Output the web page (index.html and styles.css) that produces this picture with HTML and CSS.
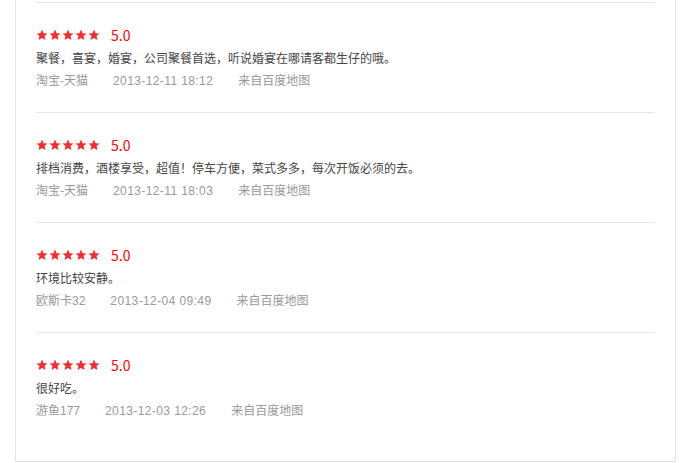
FILE: index.html
```html
<!doctype html>
<html lang="zh-CN">
  <head>
    <meta charset="UTF-8" />
    <title>用户点评</title>
    <link rel="stylesheet" href="styles.css">
  </head>
  <body>
    <div class="comments">
      <ul class="comment-list">
        <li class="comment">
          <div class="rating">
            <span class="stars"></span>
            <span class="score">5.0</span>
          </div>
          <p class="content">聚餐，喜宴，婚宴，公司聚餐首选，听说婚宴在哪请客都生仔的哦。</p>
          <div class="meta">
            <span>淘宝-天猫</span>
            <span class="time">2013-12-11 18:12</span>
            <span>来自百度地图</span>
          </div>
        </li>
        <li class="comment">
          <div class="rating">
            <span class="stars"></span>
            <span class="score">5.0</span>
          </div>
          <p class="content">排档消费，酒楼享受，超值！停车方便，菜式多多，每次开饭必须的去。</p>
          <div class="meta">
            <span>淘宝-天猫</span>
            <span class="time">2013-12-11 18:03</span>
            <span>来自百度地图</span>
          </div>
        </li>
        <li class="comment">
          <div class="rating">
            <span class="stars"></span>
            <span class="score">5.0</span>
          </div>
          <p class="content">环境比较安静。</p>
          <div class="meta">
            <span>欧斯卡32</span>
            <span class="time">2013-12-04 09:49</span>
            <span>来自百度地图</span>
          </div>
        </li>
        <li class="comment">
          <div class="rating">
            <span class="stars"></span>
            <span class="score">5.0</span>
          </div>
          <p class="content">很好吃。</p>
          <div class="meta">
            <span>游鱼177</span>
            <span class="time">2013-12-03 12:26</span>
            <span>来自百度地图</span>
          </div>
        </li>
      </ul>
    </div>

    <script>
      const star =
        '<svg class="star" width="12" height="12" viewBox="0 0 24 24"><path d="M12 1l3.2 7.3 7.8.7-5.9 5.2 1.8 7.8L12 17.9 5.1 22l1.8-7.8L1 9l7.8-.7z" fill="#f22e2e"/></svg>';
      document.querySelectorAll(".stars").forEach((el) => {
        el.innerHTML = star.repeat(5);
      });
    </script>
  </body>
</html>
```

FILE: styles.css
```css
body {
  margin: 0;
  font-family: "Microsoft YaHei", "Noto Sans CJK SC", sans-serif;
  font-size: 12px;
  color: #333;
  background: #fff;
}
.comments {
  width: 661px;
  margin-left: 15px;
  padding: 2px 20px 19px;
  box-sizing: border-box;
  border: 1px solid #e3e3e3;
  border-top: none;
}
.comment-list {
  list-style: none;
  margin: 0;
  padding: 0;
}
.comment {
  height: 110px;
  box-sizing: border-box;
  padding-top: 22px;
  border-top: 1px solid #e6e6e6;
}
.rating {
  display: flex;
  align-items: center;
  height: 20px;
}
.stars {
  display: flex;
  gap: 1px;
}
.star {
  display: block;
}
.score {
  margin-left: 11px;
  font-size: 14px;
  color: #f00;
}
.content {
  margin: 2px 0 0;
  line-height: 22px;
  color: #444;
}
.meta {
  display: flex;
  gap: 25px;
  line-height: 24px;
  font-family: "Liberation Sans", "Noto Sans CJK SC", sans-serif;
  color: #999;
}
.time {
  letter-spacing: 0.4px;
}
```
